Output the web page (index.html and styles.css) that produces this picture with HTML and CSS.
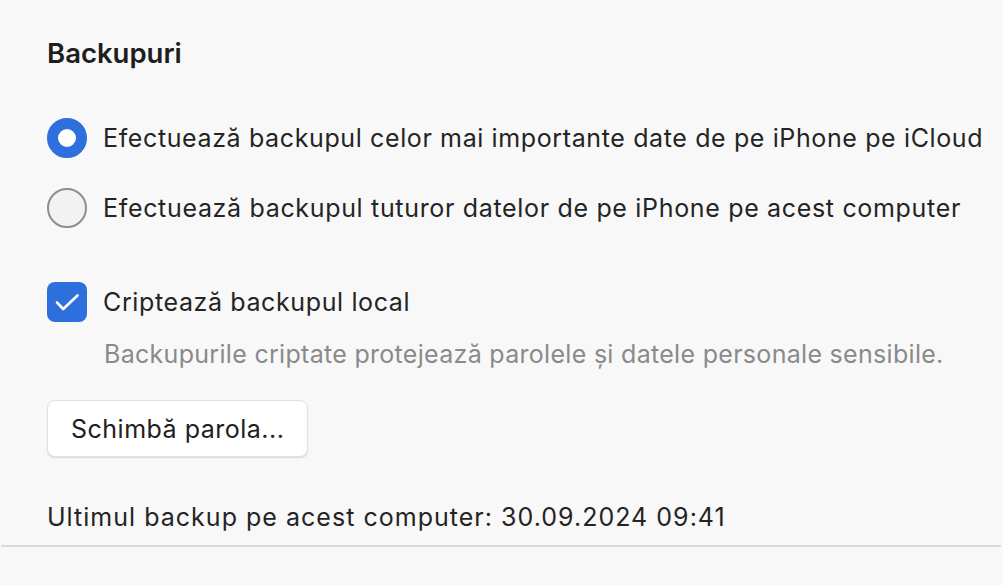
FILE: index.html
```html
<!DOCTYPE html>
<html lang="ro">
<head>
<meta charset="utf-8">
<title>Backupuri</title>
<link rel="stylesheet" href="styles.css">
</head>
<body>
<main class="panel">
  <h2 class="title">Backupuri</h2>
  <div class="options">
    <label class="row"><span class="radio radio-on"></span><span class="label">Efectuează backupul celor mai importante date de pe iPhone pe iCloud</span></label>
    <label class="row"><span class="radio"></span><span class="label label-wide">Efectuează backupul tuturor datelor de pe iPhone pe acest computer</span></label>
  </div>
  <label class="row check-row"><span class="checkbox"><svg width="40" height="40" viewBox="0 0 40 40"><path d="M10 20.5 L16.2 27 L30.5 13.5" fill="none" stroke="#fff" stroke-width="2.6" stroke-linecap="round" stroke-linejoin="round"/></svg></span><span class="label">Criptează backupul local</span></label>
  <p class="hint">Backupurile criptate protejează parolele și datele personale sensibile.</p>
  <button class="btn" type="button">Schimbă parola...</button>
  <p class="last">Ultimul backup pe acest computer: 30.09.2024 09:41</p>
</main>
<div class="divider"></div>
</body>
</html>
```
FILE: styles.css
```css
html, body {
  margin: 0;
  padding: 0;
  background: #f8f8f8;
}
body {
  width: 1003px;
  height: 585px;
  overflow: hidden;
  font-family: Inter, "Liberation Sans", sans-serif;
  color: #242424;
}
.panel {
  padding: 37px 0 0 47px;
  display: flex;
  flex-direction: column;
  align-items: flex-start;
}
.title {
  margin: 0;
  font-size: 27.5px;
  line-height: 32px;
  font-weight: 600;
  color: #1e1e1e;
}
.options {
  margin-top: 49px;
  display: flex;
  flex-direction: column;
  gap: 30px;
}
.row {
  display: flex;
  align-items: center;
  gap: 16px;
  height: 40px;
  font-size: 25px;
  letter-spacing: 0.62px;
}
.label-wide {
  letter-spacing: 0.67px;
}
.radio {
  width: 40px;
  height: 40px;
  box-sizing: border-box;
  border-radius: 50%;
  border: 2px solid #8d8d8d;
  background: #f2f2f2;
  flex: none;
}
.radio-on {
  border: 11px solid #2d6fdc;
  background: #fff;
}
.check-row {
  margin-top: 54px;
}
.checkbox {
  width: 40px;
  height: 40px;
  border-radius: 8px;
  background: #2d6fdc;
  flex: none;
  display: flex;
}
.hint {
  margin: 17px 0 0 57px;
  font-size: 25px;
  line-height: 30px;
  letter-spacing: 0.3px;
  color: #8a8a8a;
}
.btn {
  margin-top: 31px;
  width: 261px;
  height: 57px;
  box-sizing: border-box;
  padding: 0 0 0 23px;
  text-align: left;
  font-family: inherit;
  font-size: 25px;
  letter-spacing: 0.5px;
  color: #202020;
  background: #fff;
  border: 1px solid #e2e2e2;
  border-radius: 8px;
  box-shadow: 0 1px 1.5px rgba(0, 0, 0, 0.14);
}
.last {
  margin: 45px 0 0 0;
  font-size: 25px;
  line-height: 30px;
  letter-spacing: 1.02px;
  color: #242424;
}
.divider {
  margin: 13px 2px 0 1px;
  height: 2px;
  background: #dadada;
}
```
